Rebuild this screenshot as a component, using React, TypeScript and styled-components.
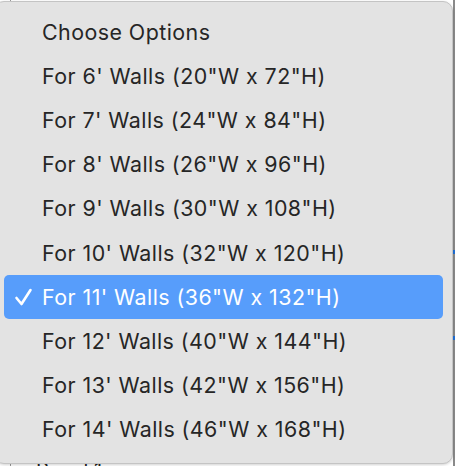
import React from "react";
import styled, { createGlobalStyle } from "styled-components";

const Global = createGlobalStyle`
  html, body { margin: 0; padding: 0; background: #ffffff; }
  body { width: 456px; height: 466px; overflow: hidden; font-family: Inter, "Liberation Sans", sans-serif; }
`;

const Page = styled.div`
  position: relative;
  width: 456px;
  height: 466px;
  overflow: hidden;
  background: #ffffff;
`;

const Backdrop = styled.div`
  display: flex;
  height: 100%;
`;

const Gutter = styled.div`
  width: 10px;
  border-right: 1px solid #9a9a9a;
`;

const Content = styled.div`
  flex: 1;
  display: flex;
  flex-direction: column;
  justify-content: space-between;
  padding-left: 25px;
  border-right: 2px solid #8a8a8a;
  margin-right: 1px;
`;

const Ticks = styled.div`
  display: flex;
  flex-direction: column;
  align-items: flex-end;
  gap: 82px;
  padding-top: 250px;
  margin-right: -2px;
`;

const Tick = styled.span`
  width: 3px;
  height: 4px;
  background: #1f6fd6;
`;

const PanelLabel = styled.div`
  font-size: 20px;
  color: #222;
  line-height: 20px;
  margin-bottom: -14px;
`;

const Menu = styled.ul`
  position: absolute;
  left: -6px;
  top: 1px;
  width: 459px;
  margin: 0;
  padding: 8px 0 12px;
  list-style: none;
  box-sizing: border-box;
  background: #e3e3e3;
  border: 1px solid #c4c4c4;
  border-radius: 10px;
  box-shadow: 0 1px 3px rgba(0, 0, 0, 0.18);
`;

const Item = styled.li<{ $selected?: boolean }>`
  display: flex;
  align-items: center;
  height: 44.1px;
  margin: 0 9px 0 9px;
  padding-left: 38px;
  position: relative;
  border-radius: 5px;
  font-size: 21.4px;
  letter-spacing: 0.45px;
  color: ${(p) => (p.$selected ? "#ffffff" : "#262626")};
  background: ${(p) => (p.$selected ? "#579dfb" : "transparent")};
`;

const Check = styled.svg`
  position: absolute;
  left: 10px;
  top: 12px;
  width: 19px;
  height: 20px;
`;

const options = [
  "Choose Options",
  `For 6' Walls (20"W x 72"H)`,
  `For 7' Walls (24"W x 84"H)`,
  `For 8' Walls (26"W x 96"H)`,
  `For 9' Walls (30"W x 108"H)`,
  `For 10' Walls (32"W x 120"H)`,
  `For 11' Walls (36"W x 132"H)`,
  `For 12' Walls (40"W x 144"H)`,
  `For 13' Walls (42"W x 156"H)`,
  `For 14' Walls (46"W x 168"H)`,
];

export default function App() {
  return (
    <Page>
      <Global />
      <Backdrop>
        <Gutter />
        <Content>
          <Ticks>
            <Tick />
            <Tick />
          </Ticks>
          <PanelLabel>Panel 1</PanelLabel>
        </Content>
      </Backdrop>
      <Menu>
        {options.map((o, i) => (
          <Item key={o} $selected={i === 6}>
            {i === 6 && (
              <Check viewBox="0 0 19 20">
                <path d="M2.5 11 L7.5 17 L16.5 3" fill="none" stroke="#fff" strokeWidth="2.6" strokeLinecap="round" strokeLinejoin="round" />
              </Check>
            )}
            {o}
          </Item>
        ))}
      </Menu>
    </Page>
  );
}
